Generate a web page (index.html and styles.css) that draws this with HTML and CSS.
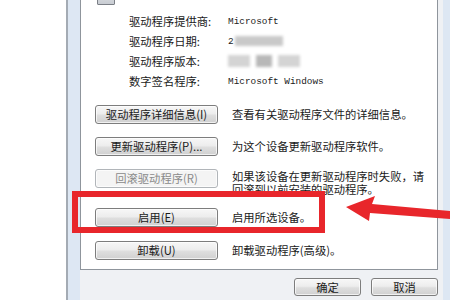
FILE: index.html
```html
<!DOCTYPE html>
<html>

<head>
    <title>驱动程序属性</title>
    <link rel="stylesheet" href="styles.css">
</head>

<body>
    <div class="desk"></div>
    <div class="window">
        <div class="dialog">
            <div class="panel">
                <div class="head">
                    <div class="device-icon"></div>
                </div>

                <div class="info">
                    <span class="label">驱动程序提供商:</span>
                    <span class="value">Microsoft</span>
                    <span class="label">驱动程序日期:</span>
                    <span class="value">2<i class="smudge wide"></i></span>
                    <span class="label">驱动程序版本:</span>
                    <span class="value"><i class="smudge"></i><i class="smudge dark"></i><i class="smudge"></i></span>
                    <span class="label">数字签名程序:</span>
                    <span class="value">Microsoft Windows</span>
                </div>

                <div class="actions">
                    <button class="btn">驱动程序详细信息(I)</button>
                    <p class="desc">查看有关驱动程序文件的详细信息。</p>

                    <button class="btn">更新驱动程序(P)...</button>
                    <p class="desc">为这个设备更新驱动程序软件。</p>

                    <button class="btn" disabled>回滚驱动程序(R)</button>
                    <p class="desc two-line">如果该设备在更新驱动程序时失败，请<br>回滚到以前安装的驱动程序。</p>

                    <button class="btn">启用(E)</button>
                    <p class="desc">启用所选设备。</p>

                    <button class="btn last">卸载(U)</button>
                    <p class="desc last">卸载驱动程序(高级)。</p>
                </div>
            </div>

            <div class="footer">
                <button class="btn small">确定</button>
                <button class="btn small">取消</button>
            </div>
        </div>
    </div>

    <!-- annotation drawn on top of the screenshot -->
    <div class="highlight"></div>
    <svg class="arrow" width="450" height="300" viewBox="0 0 450 300">
        <polygon points="346,207 375,196 372,204 450,211 450,219 370,213 369,221" fill="#e8262b" />
    </svg>
</body>

</html>
```

FILE: styles.css
```css
body {
    margin: 0;
    width: 450px;
    height: 300px;
    overflow: hidden;
    display: flex;
    position: relative;
    font-family: "Noto Sans CJK SC", sans-serif;
    font-size: 11.3px;
    color: #1a1a1a;
    background: #fff;
}

.desk {
    width: 66px;
    background: #fff;
}

.window {
    flex: 1;
    display: flex;
    border-left: 2px solid #a4abb4;
    background: #dde7f3;
    padding: 0 7px 0 12px;
}

.dialog {
    flex: 1;
    display: flex;
    flex-direction: column;
    background: #eff1f4;
}

.panel {
    width: 356px;
    height: 269px;
    background: #fff;
    border: 1px solid #8f959c;
    border-top: none;
}

.head {
    display: flex;
    align-items: flex-start;
    height: 11px;
    padding-left: 16px;
}

.device-icon {
    width: 18px;
    height: 17px;
    margin-top: -12px;
    border: 1px solid #7b7f86;
    border-radius: 1px;
    background: linear-gradient(#e6e8eb, #c8ccd2);
    box-sizing: border-box;
}

.info {
    display: grid;
    grid-template-columns: 99px 1fr;
    grid-auto-rows: 20px;
    align-items: center;
    padding-left: 48px;
}

.value {
    font-family: "Liberation Mono", monospace;
    font-size: 9.4px;
    display: flex;
    align-items: center;
}

.smudge {
    display: inline-block;
    width: 22px;
    height: 12px;
    background: #d4d4d4;
    filter: blur(1.5px);
    margin-right: 6px;
}

.smudge.dark {
    background: #b8b8b8;
    width: 16px;
}

.smudge.wide {
    width: 48px;
    height: 10px;
    margin-left: 1px;
    background: #c9c9c9;
}

.actions {
    display: grid;
    grid-template-columns: 123px 1fr;
    column-gap: 14px;
    row-gap: 13px;
    margin-top: 14px;
    padding-left: 14px;
    align-items: start;
}

.desc {
    margin: 0;
    line-height: 19px;
    white-space: nowrap;
}

.desc.two-line {
    line-height: 12.5px;
    margin-top: 1px;
}

.btn.last,
.desc.last {
    margin-top: 1px;
}

.btn {
    height: 19px;
    padding: 0;
    font-family: "Noto Sans CJK SC", sans-serif;
    font-size: 11.3px;
    line-height: 17px;
    color: #1a1a1a;
    border: 1px solid #7d7d7d;
    border-radius: 3px;
    background: linear-gradient(#f7f7f7 0%, #ededed 45%, #dedede 55%, #d0d0d0 100%);
    box-shadow: inset 0 0 0 1px rgba(255, 255, 255, 0.7);
}

.btn:disabled {
    color: #8a8a8a;
    border-color: #b1b5b9;
    background: #f4f4f4;
}

.footer {
    display: flex;
    justify-content: flex-end;
    gap: 10px;
    padding: 8px 5px 0 0;
}

.btn.small {
    width: 67px;
    height: 18px;
    line-height: 16px;
}

.highlight {
    position: absolute;
    left: 72px;
    top: 191px;
    width: 253px;
    height: 42px;
    box-sizing: border-box;
    border: 6px solid #e8262b;
}

.arrow {
    position: absolute;
    left: 0;
    top: 0;
}
```
